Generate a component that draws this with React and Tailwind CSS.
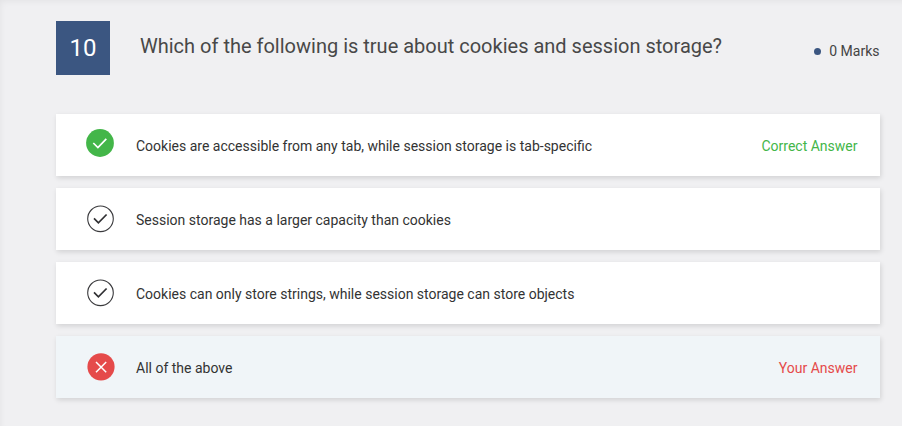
const rows = [
  { text: "Cookies are accessible from any tab, while session storage is tab-specific", kind: "correct", label: "Correct Answer" },
  { text: "Session storage has a larger capacity than cookies", kind: "none" },
  { text: "Cookies can only store strings, while session storage can store objects", kind: "none" },
  { text: "All of the above", kind: "wrong", label: "Your Answer" },
];

function Icon({ kind }) {
  if (kind === "correct")
    return (
      <svg width="28" height="28" viewBox="0 0 28 28" fill="none" className="-ml-px">
        <circle cx="14" cy="14" r="13.9" fill="#43b649" />
        <path d="M7.3 14l4.6 4.5 8.4-8.7" stroke="#fff" strokeWidth="1.7" />
      </svg>
    );
  if (kind === "wrong")
    return (
      <svg width="28" height="28" viewBox="0 0 28 28" fill="none">
        <circle cx="14" cy="13.8" r="13.6" fill="#e54a4a" />
        <path d="M9 9l10.2 10.2M19.2 9L9 19.2" stroke="#fff" strokeWidth="1.5" />
      </svg>
    );
  return (
    <svg width="28" height="28" viewBox="0 0 28 28" fill="none">
      <circle cx="13.5" cy="13.8" r="12.8" stroke="#3a3a3d" strokeWidth="1.1" />
      <path d="M7 13.4l4.4 4.5 8.2-8.4" stroke="#303033" strokeWidth="1.7" />
    </svg>
  );
}

export default function App() {
  return (
    <main className="h-[426px] w-[902px] overflow-hidden bg-[#f0f0f2] pl-14 pr-[22px] pt-[21px] font-['Roboto',sans-serif] text-[#333] shadow-[inset_3px_4px_7px_-3px_rgba(0,0,0,0.06)]">
      <header className="flex h-[93px] items-start">
        <div className="flex h-[54px] w-[54px] items-center justify-center bg-[#3b5681] text-2xl text-white">10</div>
        <h1 className="ml-[30px] mt-[10px] text-[20px] leading-[30px] text-[#484848]">Which of the following is true about cookies and session storage?</h1>
        <div className="ml-auto mr-[0.5px] mt-5 flex items-center gap-2 text-sm leading-5 text-[#444]">
          <span className="size-[7px] rounded-full bg-[#3b5681]" />0 Marks
        </div>
      </header>
      <ul className="flex flex-col gap-3">
        {rows.map((r) => (
          <li key={r.text} className={`flex h-[62px] items-center pl-[31px] pr-[22.5px] text-sm shadow-[1px_2px_5px_rgba(0,0,0,0.13)] ${r.kind === "wrong" ? "bg-[#f0f5f8]" : "bg-white"}`}>
            <div className={r.kind === "correct" ? "w-[49px] pb-1" : "w-[49px]"}><Icon kind={r.kind} /></div>
            <span className="pt-[2px]">{r.text}</span>
            {r.label && <span className={`ml-auto pt-[2px] ${r.kind === "wrong" ? "text-[#e54a4a]" : "text-[#43b649]"}`}>{r.label}</span>}
          </li>
        ))}
      </ul>
    </main>
  );
}
